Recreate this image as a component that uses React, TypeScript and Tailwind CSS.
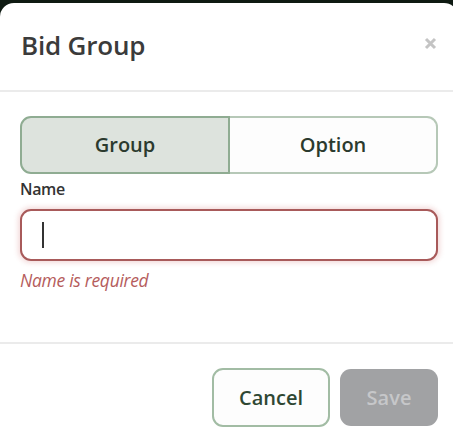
import React from "react";

export default function App() {
  return (
    <div
      className="w-[453px] h-[438px] overflow-hidden bg-[#0e1a12] pt-[3px]"
      style={{ fontFamily: '"Open Sans", "Noto Sans", sans-serif' }}
    >
      <div className="w-[458px] h-[460px] bg-white rounded-t-[14px] flex flex-col">
        <div className="h-[89px] flex items-center justify-between pl-[21px] pr-[20px] border-b-2 border-[#ebebeb]">
          <h1 className="text-[26px] font-semibold text-[#3b3b3b] tracking-[-0.2px] leading-none mb-[4px]">
            Bid Group
          </h1>
          <span className="mr-[1px] mb-[6px] flex items-center">
            <svg width="13" height="13" viewBox="0 0 13 13">
              <path d="M2 2 L11 11 M11 2 L2 11" stroke="#c4c4c4" strokeWidth="3" strokeLinecap="butt" />
            </svg>
          </span>
        </div>
        <div className="px-[20px] pt-[24px] h-[252px] border-b-2 border-[#ebebeb] flex flex-col">
          <div className="flex w-[418px] h-[58px]">
            <button className="flex-1 h-full rounded-l-[11px] border-2 border-[#8fac92] bg-[#dde3dd] text-[#2b3a2e] text-[20px] font-semibold flex items-center justify-center">
              Group
            </button>
            <button className="flex-1 h-full rounded-r-[11px] border-2 border-l-0 border-[#b6c8b7] bg-[#fdfdfd] text-[#2b3a2e] text-[20px] font-semibold flex items-center justify-center">
              Option
            </button>
          </div>
          <label className="mt-[4px] text-[16px] font-semibold text-[#333] leading-[22px] tracking-[-0.4px]">
            Name
          </label>
          <div className="mt-[9px] w-[418px] h-[52px] rounded-[11px] border-2 border-[#a85a5a] bg-white shadow-[0_0_5px_2px_rgba(200,90,90,0.22)] flex items-center pl-[20px]">
            <div className="w-[2px] h-[26px] bg-[#333]" />
          </div>
          <p className="mt-[8px] text-[17.5px] italic text-[#b55c5c] leading-[22px] tracking-[-0.3px]">
            Name is required
          </p>
        </div>
        <div className="flex justify-end gap-[10px] pr-[20px] pt-[24px] w-[458px]">
          <button className="w-[118px] h-[59px] rounded-[11px] border-2 border-[#a2bca4] bg-[#fdfdfd] text-[#2f4733] text-[20px] font-semibold">
            Cancel
          </button>
          <button className="w-[98px] h-[57px] mt-[1px] rounded-[11px] bg-[#a1a2a4] text-[#c6c7c9] text-[20px] font-semibold">
            Save
          </button>
        </div>
      </div>
    </div>
  );
}
